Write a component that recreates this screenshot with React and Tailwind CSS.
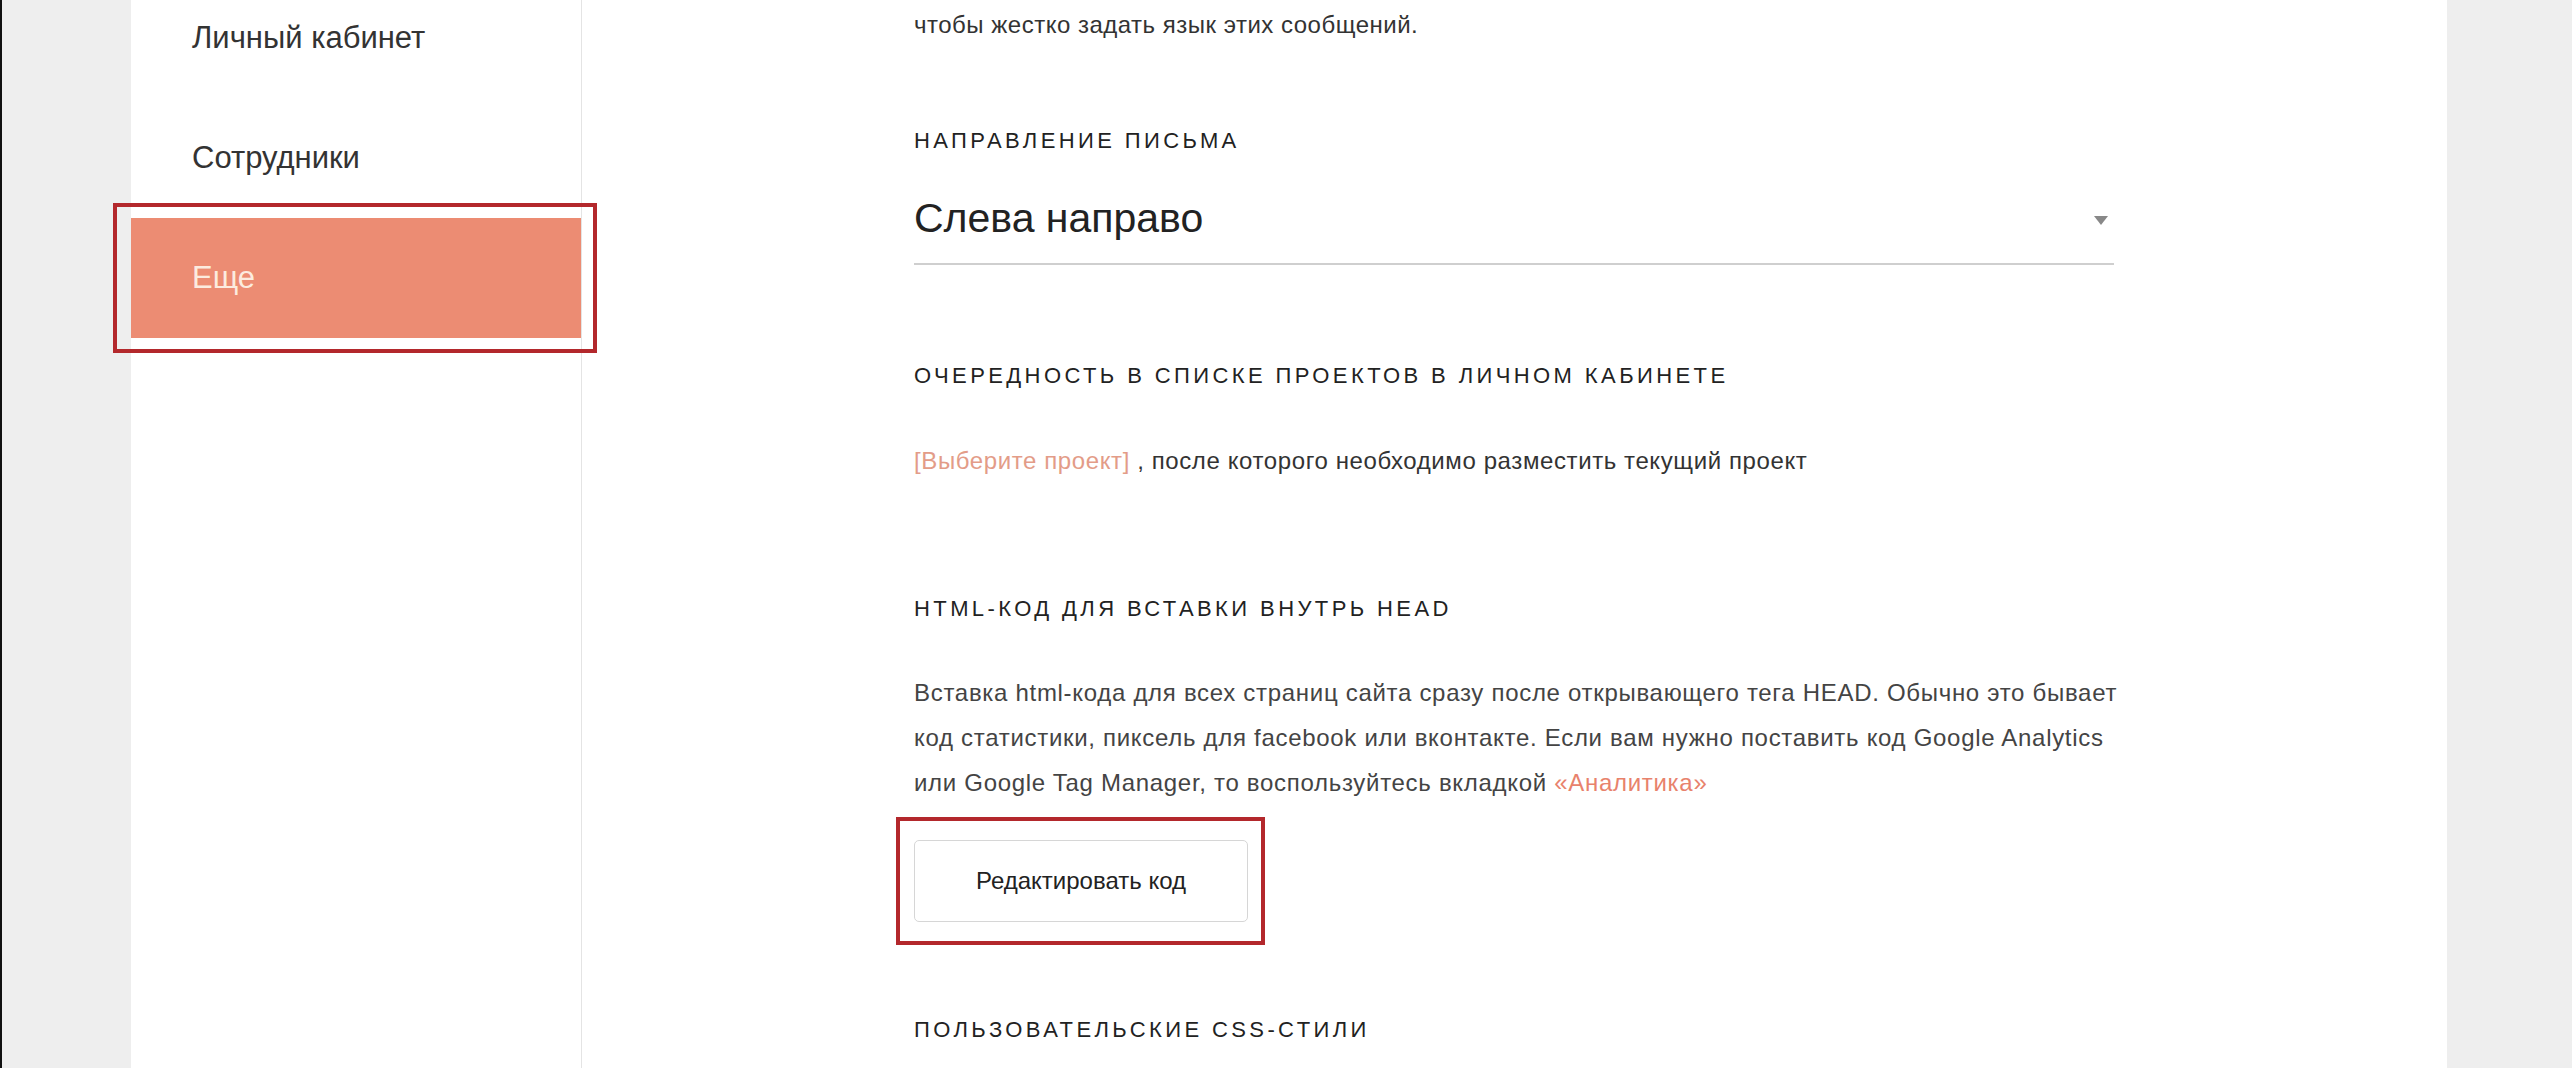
import React from 'react'

const menu = [
  { label: 'Личный кабинет' },
  { label: 'Сотрудники' },
  { label: 'Еще', active: true },
]

const Heading = ({ children, className = '' }) => (
  <h3 className={`text-[22px] leading-[30px] uppercase tracking-[3.4px] text-[#222] font-normal ${className}`}>
    {children}
  </h3>
)

const Sidebar = () => (
  <aside className="w-[451px] shrink-0 bg-white border-r border-[#e4e4e4] relative z-10">
    <ul className="-mt-[22px]">
      {menu.map((item) => (
        <li key={item.label} className="relative">
          <div
            className={
              item.active
                ? 'h-[120px] flex items-center pl-[61px] bg-[#ec8c73] text-[#fcebdf] text-[31px]'
                : 'h-[120px] flex items-center pl-[61px] text-[#333] text-[31px]'
            }
          >
            {item.label}
          </div>
          {/* red marker from the screenshot */}
          {item.active && (
            <div className="absolute -left-[18px] -right-[16px] -top-[15px] -bottom-[15px] border-4 border-[#b3282c] pointer-events-none" />
          )}
        </li>
      ))}
    </ul>
  </aside>
)

const Content = () => (
  <main className="flex-1 bg-white pl-[332px] pt-[7px]">
    <p className="text-[24px] leading-[36px] tracking-[0.5px] text-[#333]">
      чтобы жестко задать язык этих сообщений.
    </p>

    <Heading className="mt-[83px]">Направление письма</Heading>
    <div className="w-[1200px] mt-[34px] pb-[17px] border-b-2 border-[#cfcfcf] flex items-center justify-between">
      <span className="text-[41px] leading-[56px] text-[#222]">Слева направо</span>
      <svg width="14" height="9" viewBox="0 0 14 9" className="mr-[6px] mt-[4px]">
        <polygon points="0,0 14,0 7,9" fill="#888" />
      </svg>
    </div>

    <Heading className="mt-[96px]">Очередность в списке проектов в личном кабинете</Heading>
    <p className="mt-[52px] text-[24px] leading-[36px] tracking-[0.6px] text-[#333]">
      <span className="text-[#e39c88] cursor-pointer">[Выберите проект]</span> , после которого необходимо разместить текущий проект
    </p>

    <Heading className="mt-[115px]">HTML-код для вставки внутрь HEAD</Heading>
    <p className="mt-[46px] text-[24px] leading-[45px] tracking-[0.7px] text-[#444] whitespace-nowrap">
      Вставка html-кода для всех страниц сайта сразу после открывающего тега HEAD. Обычно это бывает
      <br />
      код статистики, пиксель для facebook или вконтакте. Если вам нужно поставить код Google Analytics
      <br />
      или Google Tag Manager, то воспользуйтесь вкладкой <span className="text-[#e8826c]">«Аналитика»</span>
    </p>

    <div className="relative w-[334px] mt-[35px]">
      <button
        type="button"
        className="w-[334px] h-[82px] border border-[#d6d6d6] rounded-[5px] bg-white text-[24px] text-[#222]"
      >
        Редактировать код
      </button>
      <div className="absolute -left-[18px] -right-[17px] -top-[23px] -bottom-[23px] border-4 border-[#b3282c] pointer-events-none" />
    </div>

    <Heading className="mt-[93px]">Пользовательские CSS-стили</Heading>
  </main>
)

const App = () => {
  return (
    <div className="h-[1068px] w-full overflow-hidden bg-[#eeeeee] border-l-2 border-[#111] pl-[129px] pr-[125px] flex font-['Liberation_Sans',sans-serif]">
      <Sidebar />
      <Content />
    </div>
  )
}

export default App
